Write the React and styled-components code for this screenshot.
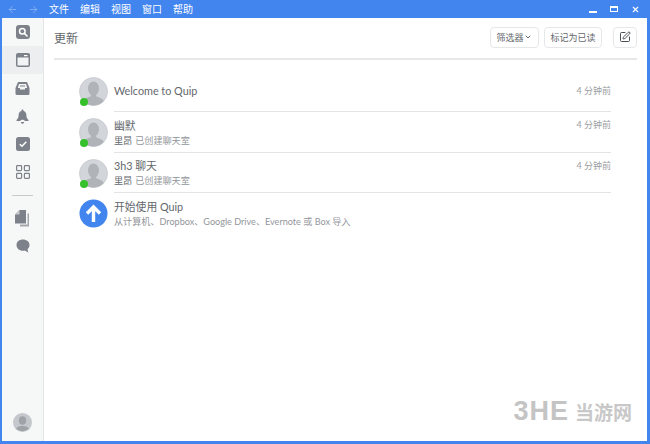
import React from 'react';
import styled, { createGlobalStyle } from 'styled-components';
import { ArrowLeft, ArrowRight, ChevronDown, SquarePen, X } from 'lucide-react';

const GlobalStyle = createGlobalStyle`
  html, body {
    margin: 0;
    padding: 0;
    background: #fff;
  }
  body {
    font-family: Lato, 'Noto Sans CJK SC', sans-serif;
    -webkit-font-smoothing: antialiased;
  }
`;

const Frame = styled.div`
  width: 650px;
  height: 444px;
  box-sizing: border-box;
  padding: 0 3px 3px 2px;
  position: relative;
  overflow: hidden;
  background: #4285ee;
  display: flex;
  flex-direction: column;
`;

const TitleBar = styled.div`
  height: 18px;
  flex: none;
  display: flex;
  align-items: center;
  color: #fff;
  font-size: 10px;
  padding-left: 5px;
`;

const NavArrow = styled.span`
  display: flex;
  width: 12px;
  margin-right: 9px;
  color: #87b0f4;
`;

const MenuItem = styled.span`
  font-family: 'Noto Sans CJK SC', sans-serif;
  font-size: 10px;
  margin-left: ${p => (p.$first ? '0' : '11px')};
  line-height: 18px;
`;

const WindowButtons = styled.div`
  margin-left: auto;
  display: flex;
  align-items: center;
  gap: 13px;
  padding-right: 7px;
`;

const Minimize = styled.span`
  width: 8px;
  height: 2px;
  margin-top: 6px;
  background: #fff;
`;

const Restore = styled.span`
  width: 8px;
  height: 6px;
  box-sizing: border-box;
  border: 1px solid #fff;
  border-top-width: 2px;
`;

const Body = styled.div`
  flex: 1;
  min-height: 0;
  display: flex;
  background: #fff;
`;

const Sidebar = styled.nav`
  width: 42px;
  flex: none;
  box-sizing: border-box;
  background: #f6f7f7;
  border-right: 1px solid #e2e4e6;
  display: flex;
  flex-direction: column;
  align-items: center;
`;

const NavSlot = styled.div`
  width: 100%;
  height: 28px;
  flex: none;
  display: flex;
  align-items: center;
  justify-content: center;
  background: ${p => (p.$active ? '#eceeef' : 'transparent')};
`;

const NavRule = styled.div`
  width: 21px;
  height: 1px;
  flex: none;
  background: #c8cbce;
  margin: 9px 0 8px;
`;

const SideAvatar = styled.div`
  margin-top: auto;
  margin-bottom: 9px;
  display: flex;
`;

const Main = styled.main`
  flex: 1;
  min-width: 0;
  display: flex;
  flex-direction: column;
  padding: 0 10px;
`;

const Header = styled.header`
  height: 42px;
  flex: none;
  box-sizing: border-box;
  border-bottom: 2px solid #e6e7e8;
  display: flex;
  align-items: center;
  padding-bottom: 2px;
`;

const Title = styled.h1`
  margin: 0;
  font-family: 'Noto Sans CJK SC', sans-serif;
  font-size: 12px;
  font-weight: 400;
  color: #63676c;
`;

const HeaderActions = styled.div`
  margin-left: auto;
  display: flex;
  align-items: center;
  gap: 5px;
`;

const HeaderButton = styled.button`
  height: 21px;
  box-sizing: border-box;
  padding: 0 ${p => (p.$icon ? '5px' : '5.5px')};
  display: flex;
  align-items: center;
  gap: 1px;
  background: #fff;
  border: 1px solid #e6e7e9;
  border-radius: 4px;
  color: #63676c;
  font-family: 'Noto Sans CJK SC', sans-serif;
  font-size: 9px;
  margin-left: ${p => (p.$icon ? '6px' : '0')};
`;

const List = styled.section`
  display: flex;
  flex-direction: column;
  padding: 11px 26px 0 25px;
`;

const Row = styled.article`
  display: flex;
  align-items: center;
  height: ${p => p.$height}px;
  gap: 6px;
`;

const AvatarWrap = styled.div`
  width: 29px;
  height: 29px;
  flex: none;
  position: relative;
`;

const Dot = styled.span`
  position: absolute;
  left: 1px;
  bottom: 0;
  width: 8px;
  height: 8px;
  border-radius: 50%;
  background: #36c12c;
`;

const RowBody = styled.div`
  flex: 1;
  align-self: stretch;
  min-width: 0;
  display: flex;
  flex-direction: column;
  justify-content: center;
  border-bottom: ${p => (p.$last ? 'none' : '1px solid #e3e4e6')};
  position: relative;
`;

const RowTitle = styled.div`
  font-size: 10.8px;
  line-height: 16px;
  color: #63676c;
`;

const RowSub = styled.div`
  font-size: 9.1px;
  line-height: 13px;
  color: #93969b;
`;

const Author = styled.span`
  color: #63676c;
  margin-right: 3px;
`;

const Time = styled.span`
  position: absolute;
  right: 0;
  top: ${p => p.$top}px;
  font-size: 9px;
  color: #9a9da1;
`;

const Watermark = styled.div`
  position: absolute;
  right: 18px;
  bottom: 19px;
  display: flex;
  align-items: center;
  gap: 6px;
  font-weight: 700;
  line-height: 1;
`;

const WatermarkLogo = styled.span`
  font-family: 'Liberation Sans', sans-serif;
  font-size: 27px;
  letter-spacing: 1px;
  color: #c4c4c4;
`;

const WatermarkName = styled.span`
  font-family: 'Noto Sans CJK SC', sans-serif;
  font-size: 19px;
  color: #c8c8c8;
`;

const ICON = '#7d828a';

const SearchIcon = () => (
  <svg width="14" height="14" viewBox="0 0 14 14">
    <rect width="14" height="14" rx="3" fill={ICON} />
    <circle cx="6.3" cy="6.3" r="2.8" fill="none" stroke="#fff" strokeWidth="1.5" />
    <path d="M8.4 8.4 11 11" stroke="#fff" strokeWidth="1.6" strokeLinecap="round" />
  </svg>
);

const WindowIcon = () => (
  <svg width="14" height="14" viewBox="0 0 14 14">
    <rect width="14" height="14" rx="2" fill={ICON} />
    <rect x="1.5" y="4.5" width="11" height="8" fill="#f2f3f4" />
    <rect x="8" y="2" width="3.5" height="1.2" fill="#fff" />
  </svg>
);

const InboxIcon = () => (
  <svg width="15" height="15" viewBox="0 0 15 15">
    <path d="M3 1h9l2.5 6v5.5a1.5 1.5 0 0 1-1.5 1.5H2a1.5 1.5 0 0 1-1.5-1.5V7z" fill={ICON} />
    <path d="M4 3h7l1.2 4H10v1.5H5V7H2.8z" fill="#f4f5f5" />
    <rect x="5" y="4.5" width="5" height="1" fill={ICON} />
  </svg>
);

const BellIcon = () => (
  <svg width="13" height="15" viewBox="0 0 13 15">
    <path d="M6.5.5c.6 0 1 .4 1 1V2c2 .5 2.9 2 2.9 4.2 0 2.3.7 3.5 2.1 4.8v1H.5v-1c1.4-1.3 2.1-2.5 2.1-4.8C2.600 4 3.500 2.500 5.500 2v-.5c0-.6.4-1 1-1z" fill={ICON} />
    <ellipse cx="6.5" cy="12" rx="2.2" ry="1.2" fill="#f4f5f5" />
    <path d="M4.800 13h3.400a1.700 1.700 0 0 1-3.400 0z" fill={ICON} />
  </svg>
);

const CheckIcon = () => (
  <svg width="14" height="14" viewBox="0 0 14 14">
    <rect width="14" height="14" rx="2.5" fill={ICON} />
    <path d="M3.800 7.200 6 9.300l4.300-4.600" fill="none" stroke="#fff" strokeWidth="1.5" />
  </svg>
);

const GridIcon = () => (
  <svg width="14" height="14" viewBox="0 0 14 14" fill="none" stroke={ICON} strokeWidth="1.2">
    <rect x="0.6" y="0.6" width="5" height="5" rx="0.8" />
    <rect x="8.4" y="0.6" width="5" height="5" rx="0.8" />
    <rect x="0.6" y="8.4" width="5" height="5" rx="0.8" />
    <rect x="8.4" y="8.4" width="5" height="5" rx="0.8" />
  </svg>
);

const DocsIcon = () => (
  <svg width="15" height="17" viewBox="0 0 15 17">
    <path d="M12.500 3.500H14v13H5v-2h7.500z" fill="#a3a7ac" />
    <path d="M4.500 0H11v13.500H0V4.500z" fill={ICON} />
    <path d="M4.500 0v4.500H0z" fill="#c5c8cb" />
  </svg>
);

const ChatIcon = () => (
  <svg width="14" height="14" viewBox="0 0 14 14">
    <path d="M7 .5c3.700 0 6.500 2.300 6.500 5.500 0 1.800-.8 3.200-2 4.200l.8 3.300-3.600-1.900C8.200 11.700 7.600 11.800 7 11.800 3.300 11.800.5 9.300.5 6S3.300.5 7 .5z" fill={ICON} />
  </svg>
);

const Avatar = () => (
  <AvatarWrap>
    <svg width="29" height="29" viewBox="0 0 29 29">
      <defs>
        <clipPath id="face">
          <circle cx="14.5" cy="14.5" r="14" />
        </clipPath>
      </defs>
      <circle cx="14.5" cy="14.5" r="14" fill="#d2d5da" stroke="#c6c9ce" strokeWidth="0.8" />
      <g clipPath="url(#face)" fill="#b0b4b9">
        <ellipse cx="14.5" cy="11.5" rx="5.5" ry="7" />
        <path d="M11.800 16h5.400v3.200c2.600 1.200 6.300 1.900 7.300 4.200V29h-20v-5.600c1-2.300 4.700-3 7.300-4.200z" />
      </g>
    </svg>
    <Dot />
  </AvatarWrap>
);

const UploadBadge = () => (
  <AvatarWrap>
    <svg width="29" height="29" viewBox="0 0 29 29">
      <circle cx="14.5" cy="14.5" r="14" fill="#4285ee" />
      <path d="M14.500 23V8M8 14.500l6.500-6.500 6.500 6.500" fill="none" stroke="#fff" strokeWidth="3.4" />
    </svg>
  </AvatarWrap>
);

const menus = ['文件', '编辑', '视图', '窗口', '帮助'];

const navItems = [
  { key: 'search', Icon: SearchIcon },
  { key: 'updates', Icon: WindowIcon, active: true },
  { key: 'inbox', Icon: InboxIcon },
  { key: 'bell', Icon: BellIcon },
  { key: 'check', Icon: CheckIcon },
  { key: 'grid', Icon: GridIcon }
];

export default function App() {
  return (
    <>
      <GlobalStyle />
      <Frame>
        <TitleBar>
          <NavArrow><ArrowLeft size={11} /></NavArrow>
          <NavArrow><ArrowRight size={11} /></NavArrow>
          {menus.map((m, i) => (
            <MenuItem key={m} $first={i === 0}>{m}</MenuItem>
          ))}
          <WindowButtons>
            <Minimize />
            <Restore />
            <X size={9} strokeWidth={3} />
          </WindowButtons>
        </TitleBar>
        <Body>
          <Sidebar>
            {navItems.map(({ key, Icon, active }) => (
              <NavSlot key={key} $active={active}><Icon /></NavSlot>
            ))}
            <NavRule />
            <NavSlot><DocsIcon /></NavSlot>
            <NavSlot><ChatIcon /></NavSlot>
            <SideAvatar>
              <svg width="19" height="19" viewBox="0 0 29 29">
                <circle cx="14.5" cy="14.5" r="14.5" fill="#c4c7cb" />
                <ellipse cx="14.5" cy="11.5" rx="5.5" ry="6.5" fill="#9fa3a8" />
                <path d="M5 24c1-3 6-4 9.500-4s8.500 1 9.500 4a14 14 0 0 1-19 0z" fill="#9fa3a8" />
              </svg>
            </SideAvatar>
          </Sidebar>
          <Main>
            <Header>
              <Title>更新</Title>
              <HeaderActions>
                <HeaderButton>筛选器<ChevronDown size={8} strokeWidth={3} /></HeaderButton>
                <HeaderButton>标记为已读</HeaderButton>
                <HeaderButton $icon>
                  <SquarePen size={12} strokeWidth={2} color="#4a4e53" />
                </HeaderButton>
              </HeaderActions>
            </Header>
            <List>
              <Row $height={41}>
                <Avatar />
                <RowBody>
                  <RowTitle>Welcome to Quip</RowTitle>
                  <Time $top={13}>4 分钟前</Time>
                </RowBody>
              </Row>
              <Row $height={41}>
                <Avatar />
                <RowBody>
                  <RowTitle>幽默</RowTitle>
                  <RowSub><Author>里昂</Author>已创建聊天室</RowSub>
                  <Time $top={6}>4 分钟前</Time>
                </RowBody>
              </Row>
              <Row $height={40}>
                <Avatar />
                <RowBody>
                  <RowTitle>3h3 聊天</RowTitle>
                  <RowSub><Author>里昂</Author>已创建聊天室</RowSub>
                  <Time $top={6}>4 分钟前</Time>
                </RowBody>
              </Row>
              <Row $height={40}>
                <UploadBadge />
                <RowBody $last>
                  <RowTitle>开始使用 Quip</RowTitle>
                  <RowSub>从计算机、Dropbox、Google Drive、Evernote 或 Box 导入</RowSub>
                </RowBody>
              </Row>
            </List>
          </Main>
        </Body>
        <Watermark>
          <WatermarkLogo>3HE</WatermarkLogo>
          <WatermarkName>当游网</WatermarkName>
        </Watermark>
      </Frame>
    </>
  );
}
